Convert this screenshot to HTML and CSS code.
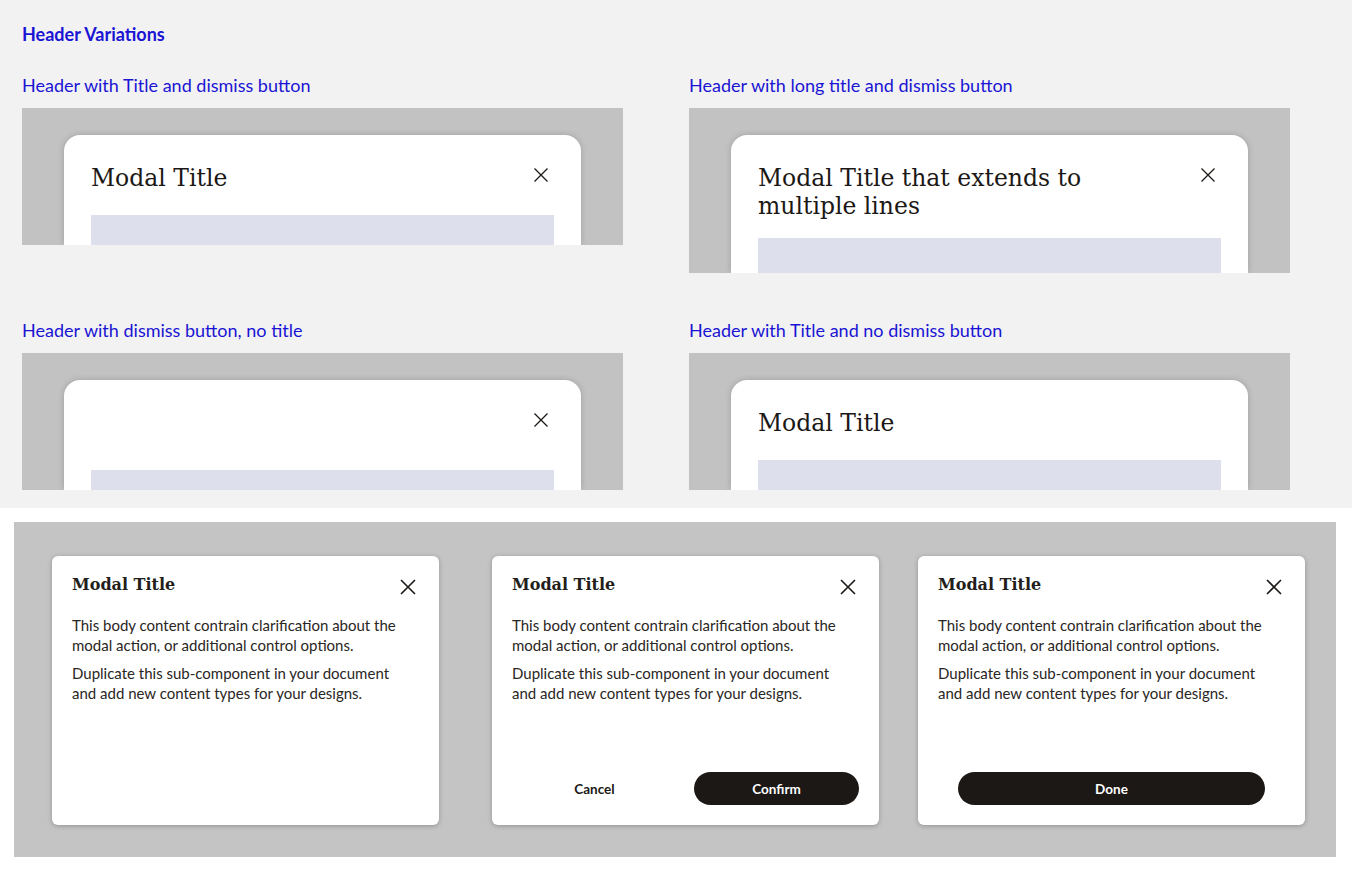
FILE: index.html
```html
<!DOCTYPE html>
<html lang="en">
<head>
    <meta charset="UTF-8">
    <meta name="viewport" content="width=device-width, initial-scale=1.0">
    <title>Modal Header Variations</title>
    <link rel="stylesheet" href="styles.css">
</head>
<body>
    <div class="variations">
        <h2>Header Variations</h2>

        <div class="grid">
            <div class="item">
                <p class="label">Header with Title and dismiss button</p>
                <div class="frame">
                    <div class="modal">
                        <div class="modal-head">
                            <h3>Modal Title</h3>
                            <button class="close">
                                <svg width="14" height="14" viewBox="0 0 14 14"><path d="M0.5 0.5L13.5 13.5M13.5 0.5L0.5 13.5" stroke="#1c1816" stroke-width="1.3" fill="none"/></svg>
                            </button>
                        </div>
                        <div class="slot"></div>
                    </div>
                </div>
            </div>

            <div class="item">
                <p class="label">Header with long title and dismiss button</p>
                <div class="frame tall">
                    <div class="modal">
                        <div class="modal-head long">
                            <h3>Modal Title that extends to multiple lines</h3>
                            <button class="close">
                                <svg width="14" height="14" viewBox="0 0 14 14"><path d="M0.5 0.5L13.5 13.5M13.5 0.5L0.5 13.5" stroke="#1c1816" stroke-width="1.3" fill="none"/></svg>
                            </button>
                        </div>
                        <div class="slot"></div>
                    </div>
                </div>
            </div>

            <div class="item">
                <p class="label">Header with dismiss button, no title</p>
                <div class="frame">
                    <div class="modal">
                        <div class="modal-head bare">
                            <button class="close">
                                <svg width="14" height="14" viewBox="0 0 14 14"><path d="M0.5 0.5L13.5 13.5M13.5 0.5L0.5 13.5" stroke="#1c1816" stroke-width="1.3" fill="none"/></svg>
                            </button>
                        </div>
                        <div class="slot"></div>
                    </div>
                </div>
            </div>

            <div class="item">
                <p class="label">Header with Title and no dismiss button</p>
                <div class="frame">
                    <div class="modal">
                        <div class="modal-head">
                            <h3>Modal Title</h3>
                        </div>
                        <div class="slot"></div>
                    </div>
                </div>
            </div>
        </div>
    </div>

    <div class="panel">
        <div class="dialog">
            <div class="dialog-head">
                <h4>Modal Title</h4>
                <button class="close">
                    <svg width="16" height="16" viewBox="0 0 16 16"><path d="M1 1L15 15M15 1L1 15" stroke="#1c1816" stroke-width="1.6" fill="none"/></svg>
                </button>
            </div>
            <div class="dialog-body">
                <p>This body content contrain clarification about the modal action, or additional control options.</p>
                <p>Duplicate this sub-component in your document and add new content types for your designs.</p>
            </div>
        </div>

        <div class="dialog">
            <div class="dialog-head">
                <h4>Modal Title</h4>
                <button class="close">
                    <svg width="16" height="16" viewBox="0 0 16 16"><path d="M1 1L15 15M15 1L1 15" stroke="#1c1816" stroke-width="1.6" fill="none"/></svg>
                </button>
            </div>
            <div class="dialog-body">
                <p>This body content contrain clarification about the modal action, or additional control options.</p>
                <p>Duplicate this sub-component in your document and add new content types for your designs.</p>
            </div>
            <div class="dialog-foot">
                <button class="btn ghost">Cancel</button>
                <button class="btn">Confirm</button>
            </div>
        </div>

        <div class="dialog">
            <div class="dialog-head">
                <h4>Modal Title</h4>
                <button class="close">
                    <svg width="16" height="16" viewBox="0 0 16 16"><path d="M1 1L15 15M15 1L1 15" stroke="#1c1816" stroke-width="1.6" fill="none"/></svg>
                </button>
            </div>
            <div class="dialog-body">
                <p>This body content contrain clarification about the modal action, or additional control options.</p>
                <p>Duplicate this sub-component in your document and add new content types for your designs.</p>
            </div>
            <div class="dialog-foot single">
                <button class="btn">Done</button>
            </div>
        </div>
    </div>
</body>
</html>
```

FILE: styles.css
```css
body { margin: 0; background: #fff; font-family: Lato, "Liberation Sans", sans-serif; color: #1c1816; }
h2, h3, h4, p { margin: 0; }
button { font-family: inherit; border: none; background: none; padding: 0; cursor: pointer; }

.variations { background: #f2f2f2; padding: 24px 22px 18px; }
.variations h2 { font-size: 18px; line-height: 20px; font-weight: 700; color: #1a14d4; }
.grid { display: grid; grid-template-columns: 601px 601px; column-gap: 66px; row-gap: 47px; margin-top: 31px; align-items: start; }
.label { font-size: 18px; line-height: 20px; color: #1a14d4; margin-bottom: 13px; }

.frame { background: #c2c2c2; height: 137px; overflow: hidden; padding: 27px 42px 0; box-sizing: border-box; }
.frame.tall { height: 165px; }
.modal { background: #fff; border-radius: 16px 16px 0 0; padding: 0 27px; box-shadow: 0 0 6px rgba(0,0,0,0.18); height: 100%; }
.modal-head { display: flex; justify-content: space-between; align-items: flex-start; padding-top: 26px; height: 80px; box-sizing: border-box; }
.modal-head.long { height: 103px; }
.modal-head.bare { height: 90px; justify-content: flex-end; }
.modal-head h3 { font-family: "DejaVu Serif", serif; font-weight: 400; font-size: 23.5px; line-height: 28px; max-width: 360px; margin-top: 3px; color: #1c1816; }
.modal-head .close { width: 26px; height: 26px; display: flex; align-items: center; justify-content: center; margin-top: 1px; }
.slot { background: #dedfec; height: 60px; }

.panel { background: #c4c4c4; margin: 14px 16px 0 14px; padding: 34px 31px 32px 38px; display: flex; }
.dialog { width: 387px; height: 269px; box-sizing: border-box; background: #fff; border-radius: 6px; box-shadow: 0 1px 5px rgba(0,0,0,0.25); padding: 19px 20px 20px; display: flex; flex-direction: column; }
.dialog:nth-child(1) { margin-right: 53px; }
.dialog:nth-child(2) { margin-right: 39px; }
.dialog-head { display: flex; justify-content: space-between; align-items: flex-start; }
.dialog-head h4 { font-family: "DejaVu Serif", serif; font-weight: 700; font-size: 16px; line-height: 20px; color: #231e1b; }
.dialog-head .close { width: 22px; height: 22px; display: flex; align-items: center; justify-content: center; margin-top: 1px; }
.dialog-body { margin-top: 17px; max-width: 332px; font-size: 15px; line-height: 20px; color: #2a2623; }
.dialog-body p + p { margin-top: 8px; }
.dialog-foot { margin-top: auto; display: flex; gap: 17px; }
.dialog-foot.single { padding: 0 20px; }
.btn { flex: 1; height: 33px; border-radius: 17px; background: #1c1816; color: #fff; font-size: 13.5px; font-weight: 700; }
.btn.ghost { background: none; color: #1c1816; }
```
